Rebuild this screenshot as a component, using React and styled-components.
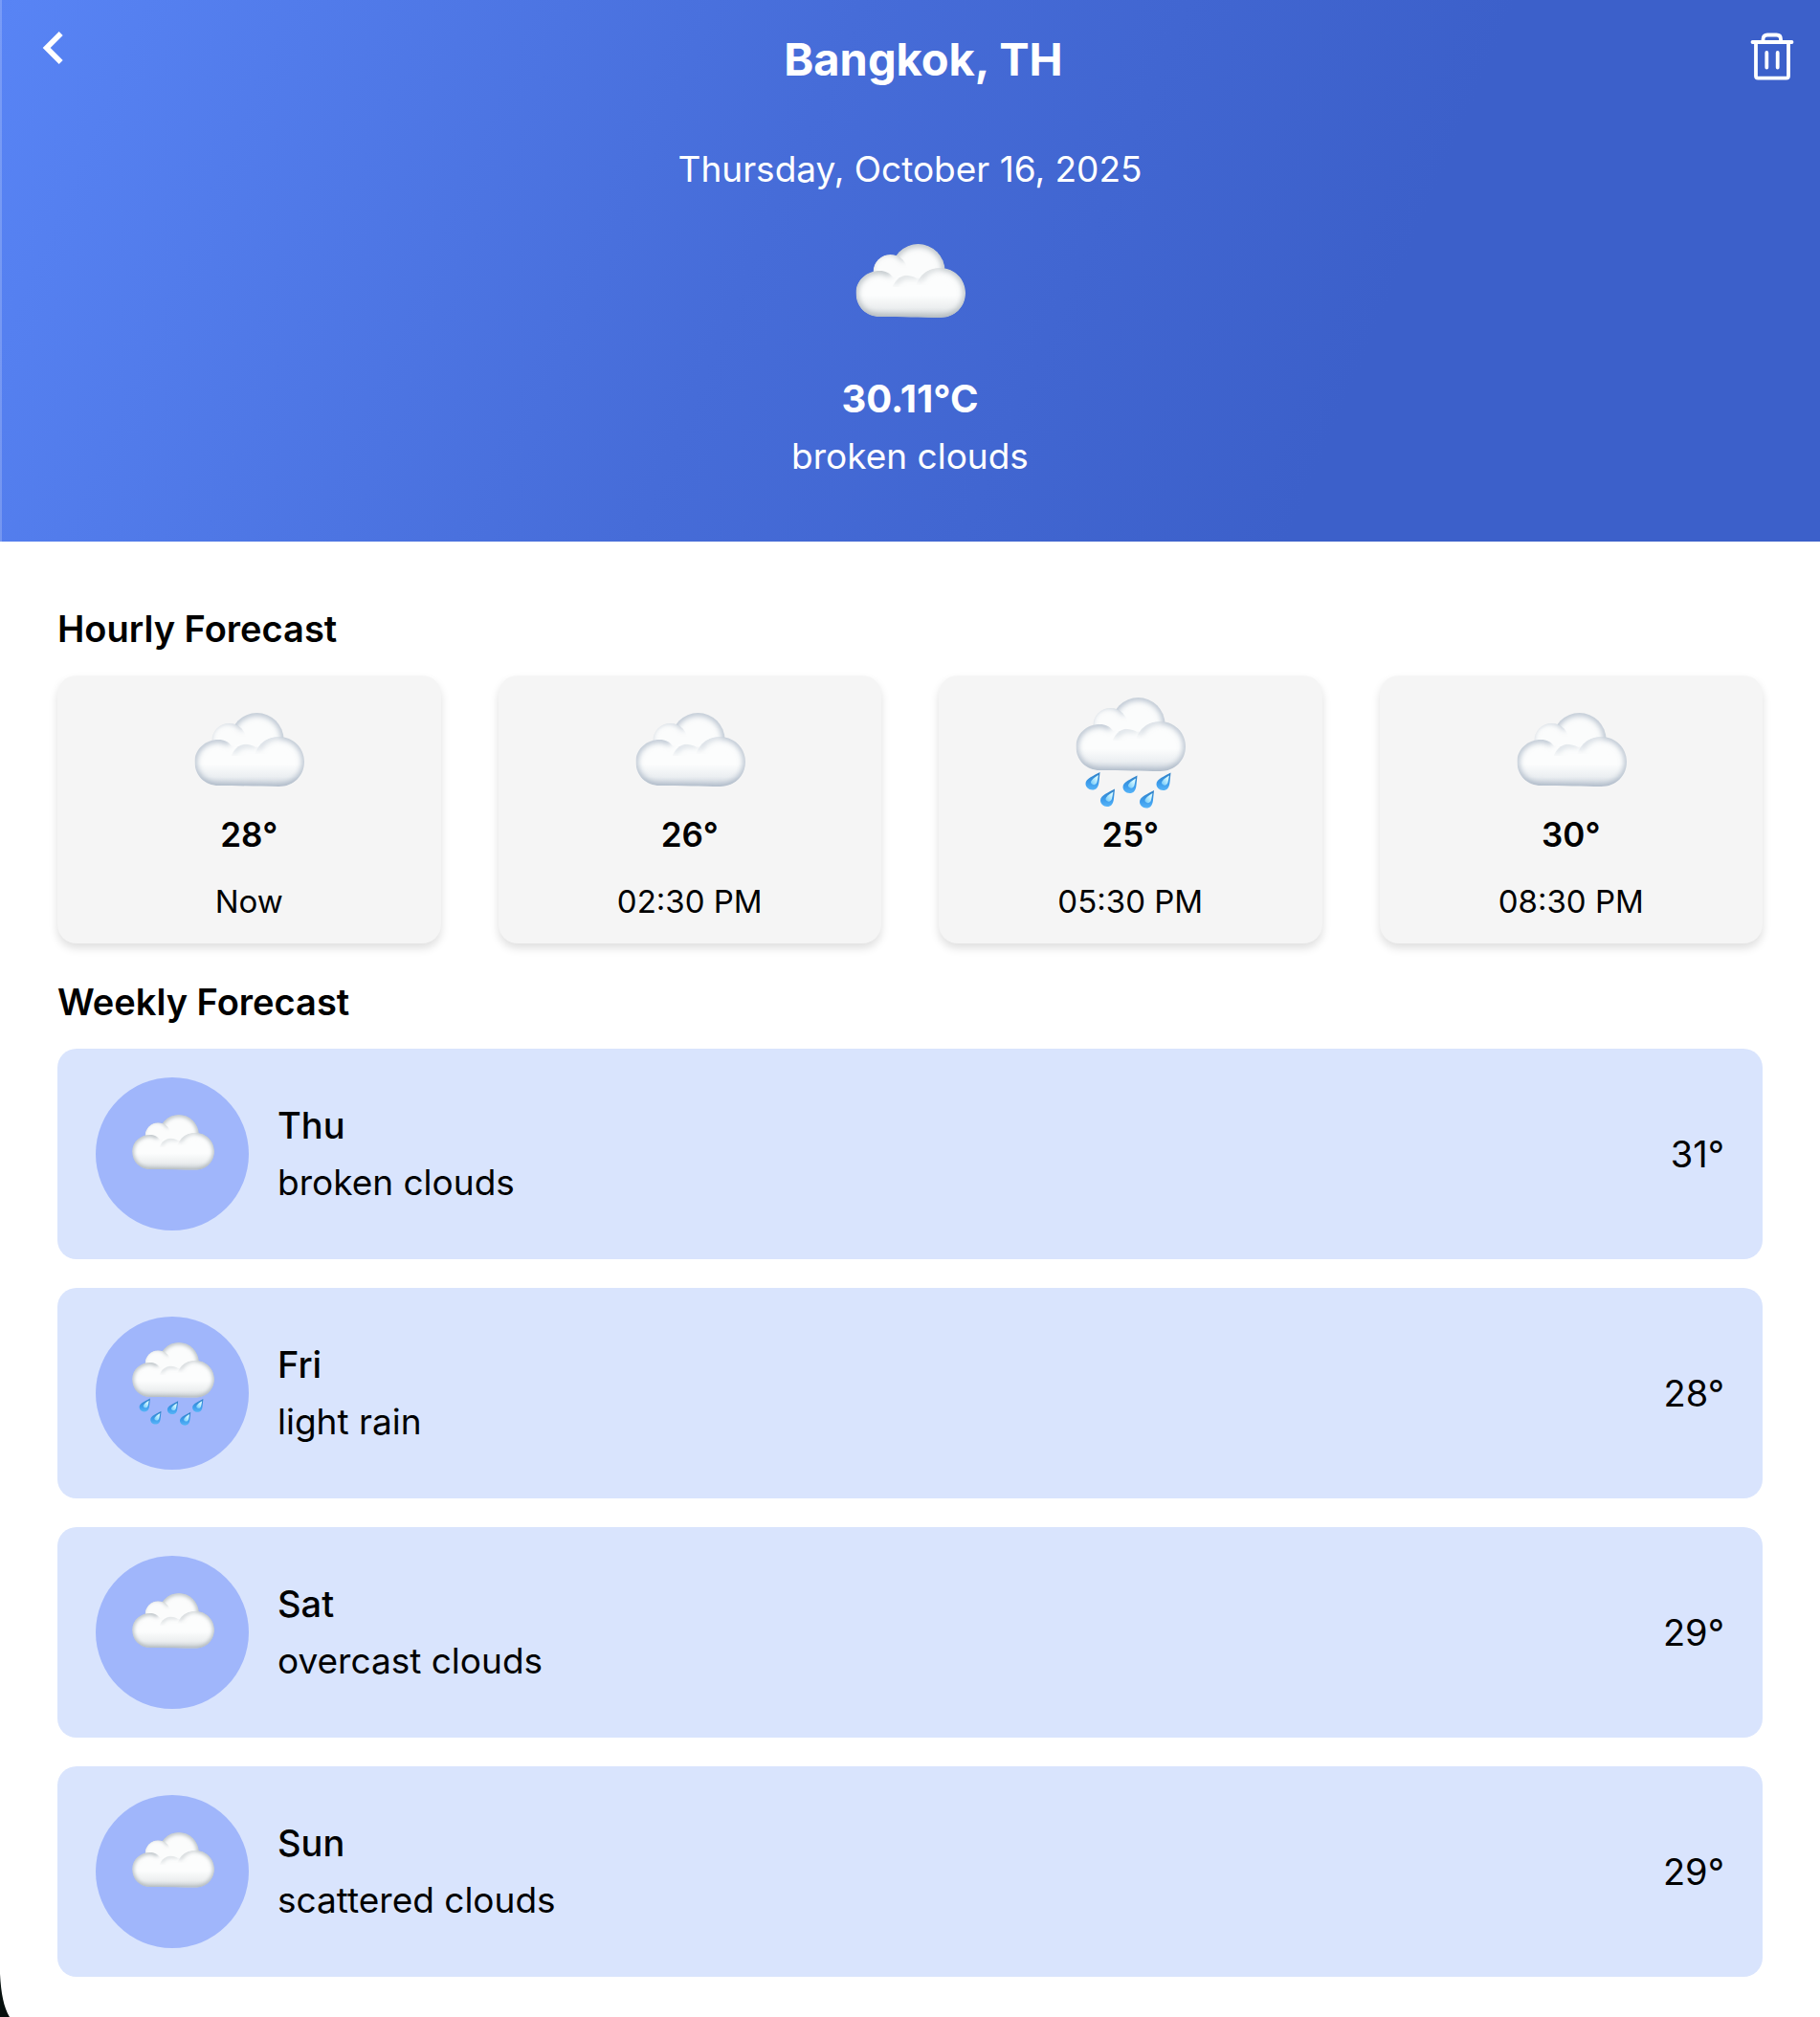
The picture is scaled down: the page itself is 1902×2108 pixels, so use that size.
import React, { useId } from "react";
import styled, { createGlobalStyle } from "styled-components";

const GlobalStyle = createGlobalStyle`
  *, *::before, *::after { box-sizing: border-box; }
  body {
    margin: 0;
    background: #ffffff;
    color: #000000;
    font-family: Inter, "Liberation Sans", sans-serif;
  }
  h1, h2, h3, p, ul { margin: 0; padding: 0; }
  ul { list-style: none; }
`;

const Page = styled.div`
  position: relative;
  min-height: 100vh;
  overflow: hidden;
`;

const Header = styled.header`
  display: flex;
  flex-direction: column;
  align-items: center;
  padding: 15px 0 59px;
  color: #ffffff;
  background: linear-gradient(113deg, #5884f5 0%, #466cd8 42%, #3c60ca 74%);
  box-shadow: inset 2px 0 0 rgba(255, 255, 255, 0.2);
`;

const TopBar = styled.div`
  display: flex;
  align-self: stretch;
  align-items: flex-start;
  justify-content: space-between;
  padding: 0 27px 0 11px;
`;

const IconButton = styled.button`
  display: flex;
  align-items: center;
  justify-content: center;
  width: ${(p) => p.$width}px;
  height: ${(p) => p.$height}px;
  padding: 0;
  border: 0;
  background: none;
  color: inherit;
  cursor: pointer;
`;

const City = styled.h1`
  font-size: 47px;
  line-height: 94px;
  font-weight: 700;
`;

const DateText = styled.p`
  margin: 38px 0 32px;
  font-size: 37px;
  line-height: 60px;
`;

const Temperature = styled.p`
  margin-top: 32px;
  font-size: 40px;
  line-height: 60px;
  font-weight: 700;
`;

const Condition = styled.p`
  font-size: 37px;
  line-height: 60px;
`;

const Content = styled.main`
  display: flex;
  flex-direction: column;
  gap: 31px;
  padding: 61px 60px 42px;
`;

const Section = styled.section`
  display: flex;
  flex-direction: column;
  gap: 19px;
`;

const SectionTitle = styled.h2`
  font-size: 38px;
  line-height: 60px;
  font-weight: 600;
`;

const HourGrid = styled.ul`
  display: grid;
  grid-template-columns: repeat(4, 1fr);
  gap: 60px;
`;

const HourCard = styled.li`
  display: flex;
  flex-direction: column;
  align-items: center;
  padding: 23px 0 17px;
  border-radius: 20px;
  background: #f5f5f5;
  box-shadow: 0 5px 10px rgba(0, 0, 0, 0.13);
`;

const HourTemp = styled.p`
  font-size: 35px;
  line-height: 54px;
  font-weight: 600;
`;

const HourTime = styled.p`
  margin-top: 16px;
  font-size: 33px;
  line-height: 54px;
`;

const DayList = styled.ul`
  display: flex;
  flex-direction: column;
  gap: 30px;
`;

const DayRow = styled.li`
  display: flex;
  align-items: center;
  gap: 30px;
  padding: 30px 40px;
  border-radius: 20px;
  background: #d9e4fd;
`;

const IconCircle = styled.div`
  display: flex;
  justify-content: center;
  flex: none;
  width: 160px;
  height: 160px;
  padding-top: 27px;
  border-radius: 50%;
  background: #a0b6fb;
`;

const DayInfo = styled.div`
  flex: 1;
`;

const DayName = styled.h3`
  font-size: 38px;
  line-height: 60px;
  font-weight: 500;
`;

const DayTemp = styled.p`
  font-size: 38px;
  line-height: 60px;
`;

const WindowCorner = styled.svg`
  position: absolute;
  left: 0;
  bottom: 0;
`;

const FRONT =
  "M0 51C0 38 11 28 25 28C31 28 35 30 39 35C45 31 57 32 64 36C70 29 78 25 88 25C103 25 114.500 37 114.500 51C114.500 66 103 77 88 77C70 77 45 76 25 76C11 76 0 66 0 51Z";
const DROP =
  "M0 0L-1 10C-1.500 16 -4 18.500 -8 18.500C-12 18.500 -15 15.500 -15 12C-15 6.500 -6 3.500 0 0Z";
const DROP_SHINE = "M-1.500 3L-3 10C-4 14 -8 14 -9.500 11C-10 8.500 -5 5 -1.500 3Z";
const DROPS = [
  [25, 78],
  [40.5, 95.5],
  [64, 81.5],
  [81.5, 97],
  [99, 78.5],
];

function WeatherIcon({ rain = false, size = 116, tint = "#a5aeb4" }) {
  const id = useId();
  const ref = (name) => `url(#${id}${name})`;
  return (
    <svg width={size} height={size} viewBox="0 0 116 116" aria-hidden="true">
      <defs>
        <filter id={id + "soft"} x="-30%" y="-30%" width="160%" height="160%">
          <feGaussianBlur stdDeviation="3" />
        </filter>
        <clipPath id={id + "back"}><circle cx="65" cy="28" r="28" /></clipPath>
        <clipPath id={id + "small"}><circle cx="36" cy="29" r="18" /></clipPath>
        <clipPath id={id + "front"}><path d={FRONT} /></clipPath>
        <clipPath id={id + "mid"}><circle cx="55" cy="50" r="17.500" /></clipPath>
        <clipPath id={id + "right"}><circle cx="88" cy="51" r="26.500" /></clipPath>
        <linearGradient id={id + "base"} x1="0" y1="0" x2="0" y2="1">
          <stop offset="0.550" stopColor={tint} stopOpacity="0" />
          <stop offset="0.800" stopColor={tint} stopOpacity="0.180" />
          <stop offset="1" stopColor={tint} stopOpacity="0.550" />
        </linearGradient>
        <linearGradient id={id + "water"} x1="0" y1="0" x2="0" y2="1">
          <stop offset="0" stopColor="#2f7fc4" />
          <stop offset="0.600" stopColor="#3c9cec" />
          <stop offset="1" stopColor="#56b4f7" />
        </linearGradient>
        <linearGradient id={id + "shine"} x1="1" y1="0" x2="0" y2="1">
          <stop offset="0.300" stopColor="#d2f7ff" />
          <stop offset="1" stopColor="#6cc6f8" />
        </linearGradient>
      </defs>
      <g transform={rain ? "translate(1.500 0)" : "translate(1.500 16)"}>
        <g clipPath={ref("back")}>
          <circle cx="65" cy="28" r="28" fill="#fbfcfc" />
          <circle cx="65" cy="28" r="28.500" fill="none" stroke={tint} strokeWidth="5" filter={ref("soft")} />
        </g>
        <g clipPath={ref("small")}>
          <circle cx="36" cy="29" r="18" fill="#fbfcfc" />
          <path d="M17 38A19 19 0 0 1 51 17" fill="none" stroke={tint} strokeWidth="4" filter={ref("soft")} />
        </g>
        <g clipPath={ref("front")}>
          <path d={FRONT} fill="#fcfdfd" />
          <g clipPath={ref("mid")}>
            <path
              d="M40 42C43 35 52 31 65 34"
              fill="none"
              stroke={tint}
              strokeOpacity="0.550"
              strokeWidth="4"
              filter={ref("soft")}
            />
          </g>
          <g clipPath={ref("right")}>
            <circle cx="84" cy="50" r="17" fill="#fcfdfd" filter={ref("soft")} />
            <path
              d="M66 38C70 31 78 25 88 24"
              fill="none"
              stroke={tint}
              strokeOpacity="0.700"
              strokeWidth="4"
              filter={ref("soft")}
            />
          </g>
          <path d={FRONT} fill={ref("base")} />
          <path
            d="M36 32C33 29 30 27 25 27.500C11 27.500 -1 38 -1 51C-1 66 11 77 25 77C45 77 70 78 88 78C103 78 115.500 66 115.500 51C115.500 37 103 24 88 24"
            fill="none"
            stroke={tint}
            strokeWidth="5"
            filter={ref("soft")}
          />
        </g>
        {rain &&
          DROPS.map(([x, y]) => (
            <g key={x} transform={`translate(${x} ${y})`}>
              <path d={DROP} fill={ref("water")} />
              <path d={DROP_SHINE} fill={ref("shine")} />
            </g>
          ))}
      </g>
    </svg>
  );
}

const HOURS = [
  { temp: "28°", time: "Now" },
  { temp: "26°", time: "02:30 PM" },
  { temp: "25°", time: "05:30 PM", rain: true },
  { temp: "30°", time: "08:30 PM" },
];

const DAYS = [
  { day: "Thu", text: "broken clouds", temp: "31°" },
  { day: "Fri", text: "light rain", temp: "28°", rain: true },
  { day: "Sat", text: "overcast clouds", temp: "29°" },
  { day: "Sun", text: "scattered clouds", temp: "29°" },
];

export default function App() {
  return (
    <Page>
      <GlobalStyle />
      <Header>
        <TopBar>
          <IconButton type="button" aria-label="Back" $width={90} $height={70}>
            <svg width="68" height="68" viewBox="0 0 24 24" fill="currentColor">
              <path d="M15.410 7.410 14 6l-6 6 6 6 1.410-1.410L10.830 12z" />
            </svg>
          </IconButton>
          <City>Bangkok, TH</City>
          <IconButton type="button" aria-label="Delete city" $width={46} $height={88}>
            <svg
              width="46"
              height="50"
              viewBox="0 0 46 50"
              fill="none"
              stroke="currentColor"
              strokeWidth="3.800"
              strokeLinecap="round"
              strokeLinejoin="round"
            >
              <path d="M2.500 10H43.500M6 10V45.500Q6 47.700 8.200 47.700H37.800Q40 47.700 40 45.500V10" />
              <path d="M13.500 9.500V7Q13.500 2.500 18 2.500H27.500Q32 2.500 32 7V9.500" />
              <path d="M17.300 21V36.500M28.700 21V36.500" />
            </svg>
          </IconButton>
        </TopBar>
        <DateText>Thursday, October 16, 2025</DateText>
        <WeatherIcon />
        <Temperature>30.11°C</Temperature>
        <Condition>broken clouds</Condition>
      </Header>
      <Content>
        <Section>
          <SectionTitle>Hourly Forecast</SectionTitle>
          <HourGrid>
            {HOURS.map((h) => (
              <HourCard key={h.time}>
                <WeatherIcon rain={h.rain} tint="#a0aebf" />
                <HourTemp>{h.temp}</HourTemp>
                <HourTime>{h.time}</HourTime>
              </HourCard>
            ))}
          </HourGrid>
        </Section>
        <Section>
          <SectionTitle>Weekly Forecast</SectionTitle>
          <DayList>
            {DAYS.map((d) => (
              <DayRow key={d.day}>
                <IconCircle>
                  <WeatherIcon rain={d.rain} size={87} />
                </IconCircle>
                <DayInfo>
                  <DayName>{d.day}</DayName>
                  <Condition>{d.text}</Condition>
                </DayInfo>
                <DayTemp>{d.temp}</DayTemp>
              </DayRow>
            ))}
          </DayList>
        </Section>
      </Content>
      <WindowCorner width="11" height="45" viewBox="0 0 11 45" aria-hidden="true">
        <path d="M0 0C1 20 4 35 10 45H0Z" fill="#07100e" />
      </WindowCorner>
    </Page>
  );
}
